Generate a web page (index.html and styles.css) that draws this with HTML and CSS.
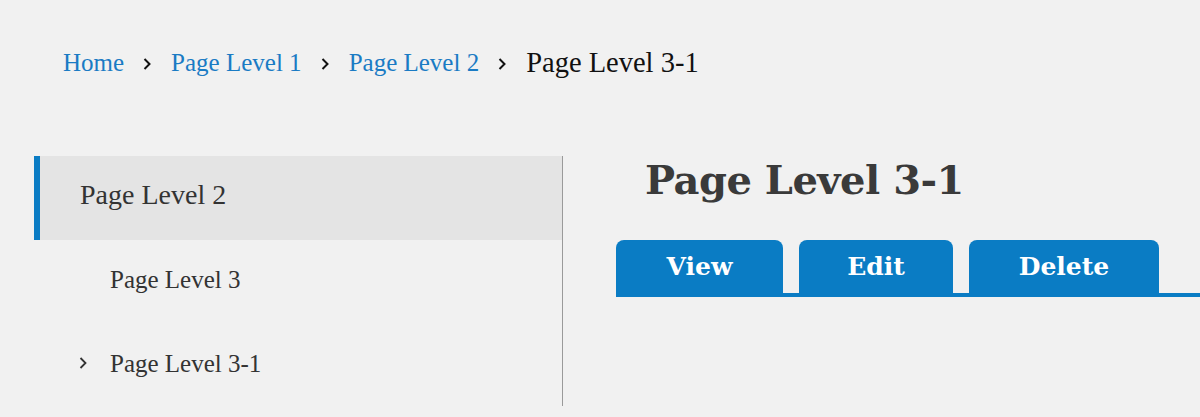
FILE: index.html
```html
<!DOCTYPE html>
<html>
<head>
<meta charset="utf-8">
<link rel="stylesheet" href="styles.css">
</head>
<body>
<nav class="breadcrumb">
  <a class="crumb" href="#">Home</a><svg class="sep" viewBox="0 0 8 12" width="8" height="12"><path d="M1.5 1 L6.5 6 L1.5 11" fill="none" stroke="#111" stroke-width="2"/></svg>
  <a class="crumb" href="#">Page Level 1</a><svg class="sep" viewBox="0 0 8 12" width="8" height="12"><path d="M1.5 1 L6.5 6 L1.5 11" fill="none" stroke="#111" stroke-width="2"/></svg>
  <a class="crumb" href="#">Page Level 2</a><svg class="sep" viewBox="0 0 8 12" width="8" height="12"><path d="M1.5 1 L6.5 6 L1.5 11" fill="none" stroke="#111" stroke-width="2"/></svg>
  <span class="crumb current">Page Level 3-1</span>
</nav>
<div class="main">
  <aside class="sidebar">
    <div class="nav-item active">Page Level 2</div>
    <div class="nav-item sub">Page Level 3</div>
    <div class="nav-item sub"><svg class="chev" viewBox="0 0 8 12" width="8" height="12"><path d="M1.5 1 L6.5 6 L1.5 11" fill="none" stroke="#333" stroke-width="1.8"/></svg>Page Level 3-1</div>
  </aside>
  <section class="content">
    <h1 class="title">Page Level 3-1</h1>
    <div class="tabs">
      <a class="tab tab-view" href="#">View</a>
      <a class="tab tab-edit" href="#">Edit</a>
      <a class="tab tab-delete" href="#">Delete</a>
    </div>
  </section>
</div>
</body>
</html>
```

FILE: styles.css
```css
html, body {
  margin: 0;
  padding: 0;
  background: #f1f1f1;
  width: 1200px;
  height: 417px;
  overflow: hidden;
}
body {
  font-family: "Liberation Serif", "Times New Roman", serif;
  color: #333;
}
.breadcrumb {
  display: flex;
  align-items: center;
  padding: 49px 0 0 63px;
  height: 112px;
  box-sizing: border-box;
  font-size: 25px;
  align-content: flex-start;
  flex-wrap: wrap;
}
.crumb {
  color: #1a7bc4;
  text-decoration: none;
  line-height: 28px;
}
.crumb.current {
  color: #111;
  font-size: 28.5px;
}
.sep {
  margin: 2px 20px 0 19px;
  flex: none;
}
.main {
  display: flex;
  padding-top: 44px;
}
.sidebar {
  margin-left: 34px;
  width: 528px;
  border-right: 1px solid #9a9a9a;
  height: 250px;
}
.nav-item {
  height: 84px;
  display: flex;
  align-items: center;
  font-size: 25px;
  color: #333;
  padding-left: 76px;
  box-sizing: border-box;
}
.nav-item.active {
  background: #e4e4e4;
  border-left: 6px solid #0a7cc4;
  padding-left: 40px;
  font-size: 28px;
  padding-bottom: 6px;
}
.nav-item.sub {
  padding-bottom: 4px;
}
.chev {
  margin-left: -31px;
  margin-right: 23px;
  margin-top: -2px;
  flex: none;
}
.content {
  flex: 1;
}
.title {
  margin: 0;
  padding-left: 82px;
  height: 84px;
  font-family: "DejaVu Serif", serif;
  font-weight: bold;
  font-size: 40px;
  letter-spacing: -0.5px;
  color: #3a3a3a;
  line-height: 48px;
}
.tabs {
  display: flex;
  gap: 16px;
  margin-left: 53px;
  border-bottom: 4px solid #0a7cc4;
  height: 53px;
}
.tab {
  background: #0a7cc4;
  color: #fff;
  text-decoration: none;
  border-radius: 8px 8px 0 0;
  font-family: "DejaVu Serif", serif;
  font-weight: bold;
  font-size: 25px;
  display: flex;
  justify-content: center;
  align-items: center;
  padding-bottom: 1px;
  box-sizing: border-box;
}
.tab-view { width: 167px; }
.tab-edit { width: 154px; }
.tab-delete { width: 190px; }
```
